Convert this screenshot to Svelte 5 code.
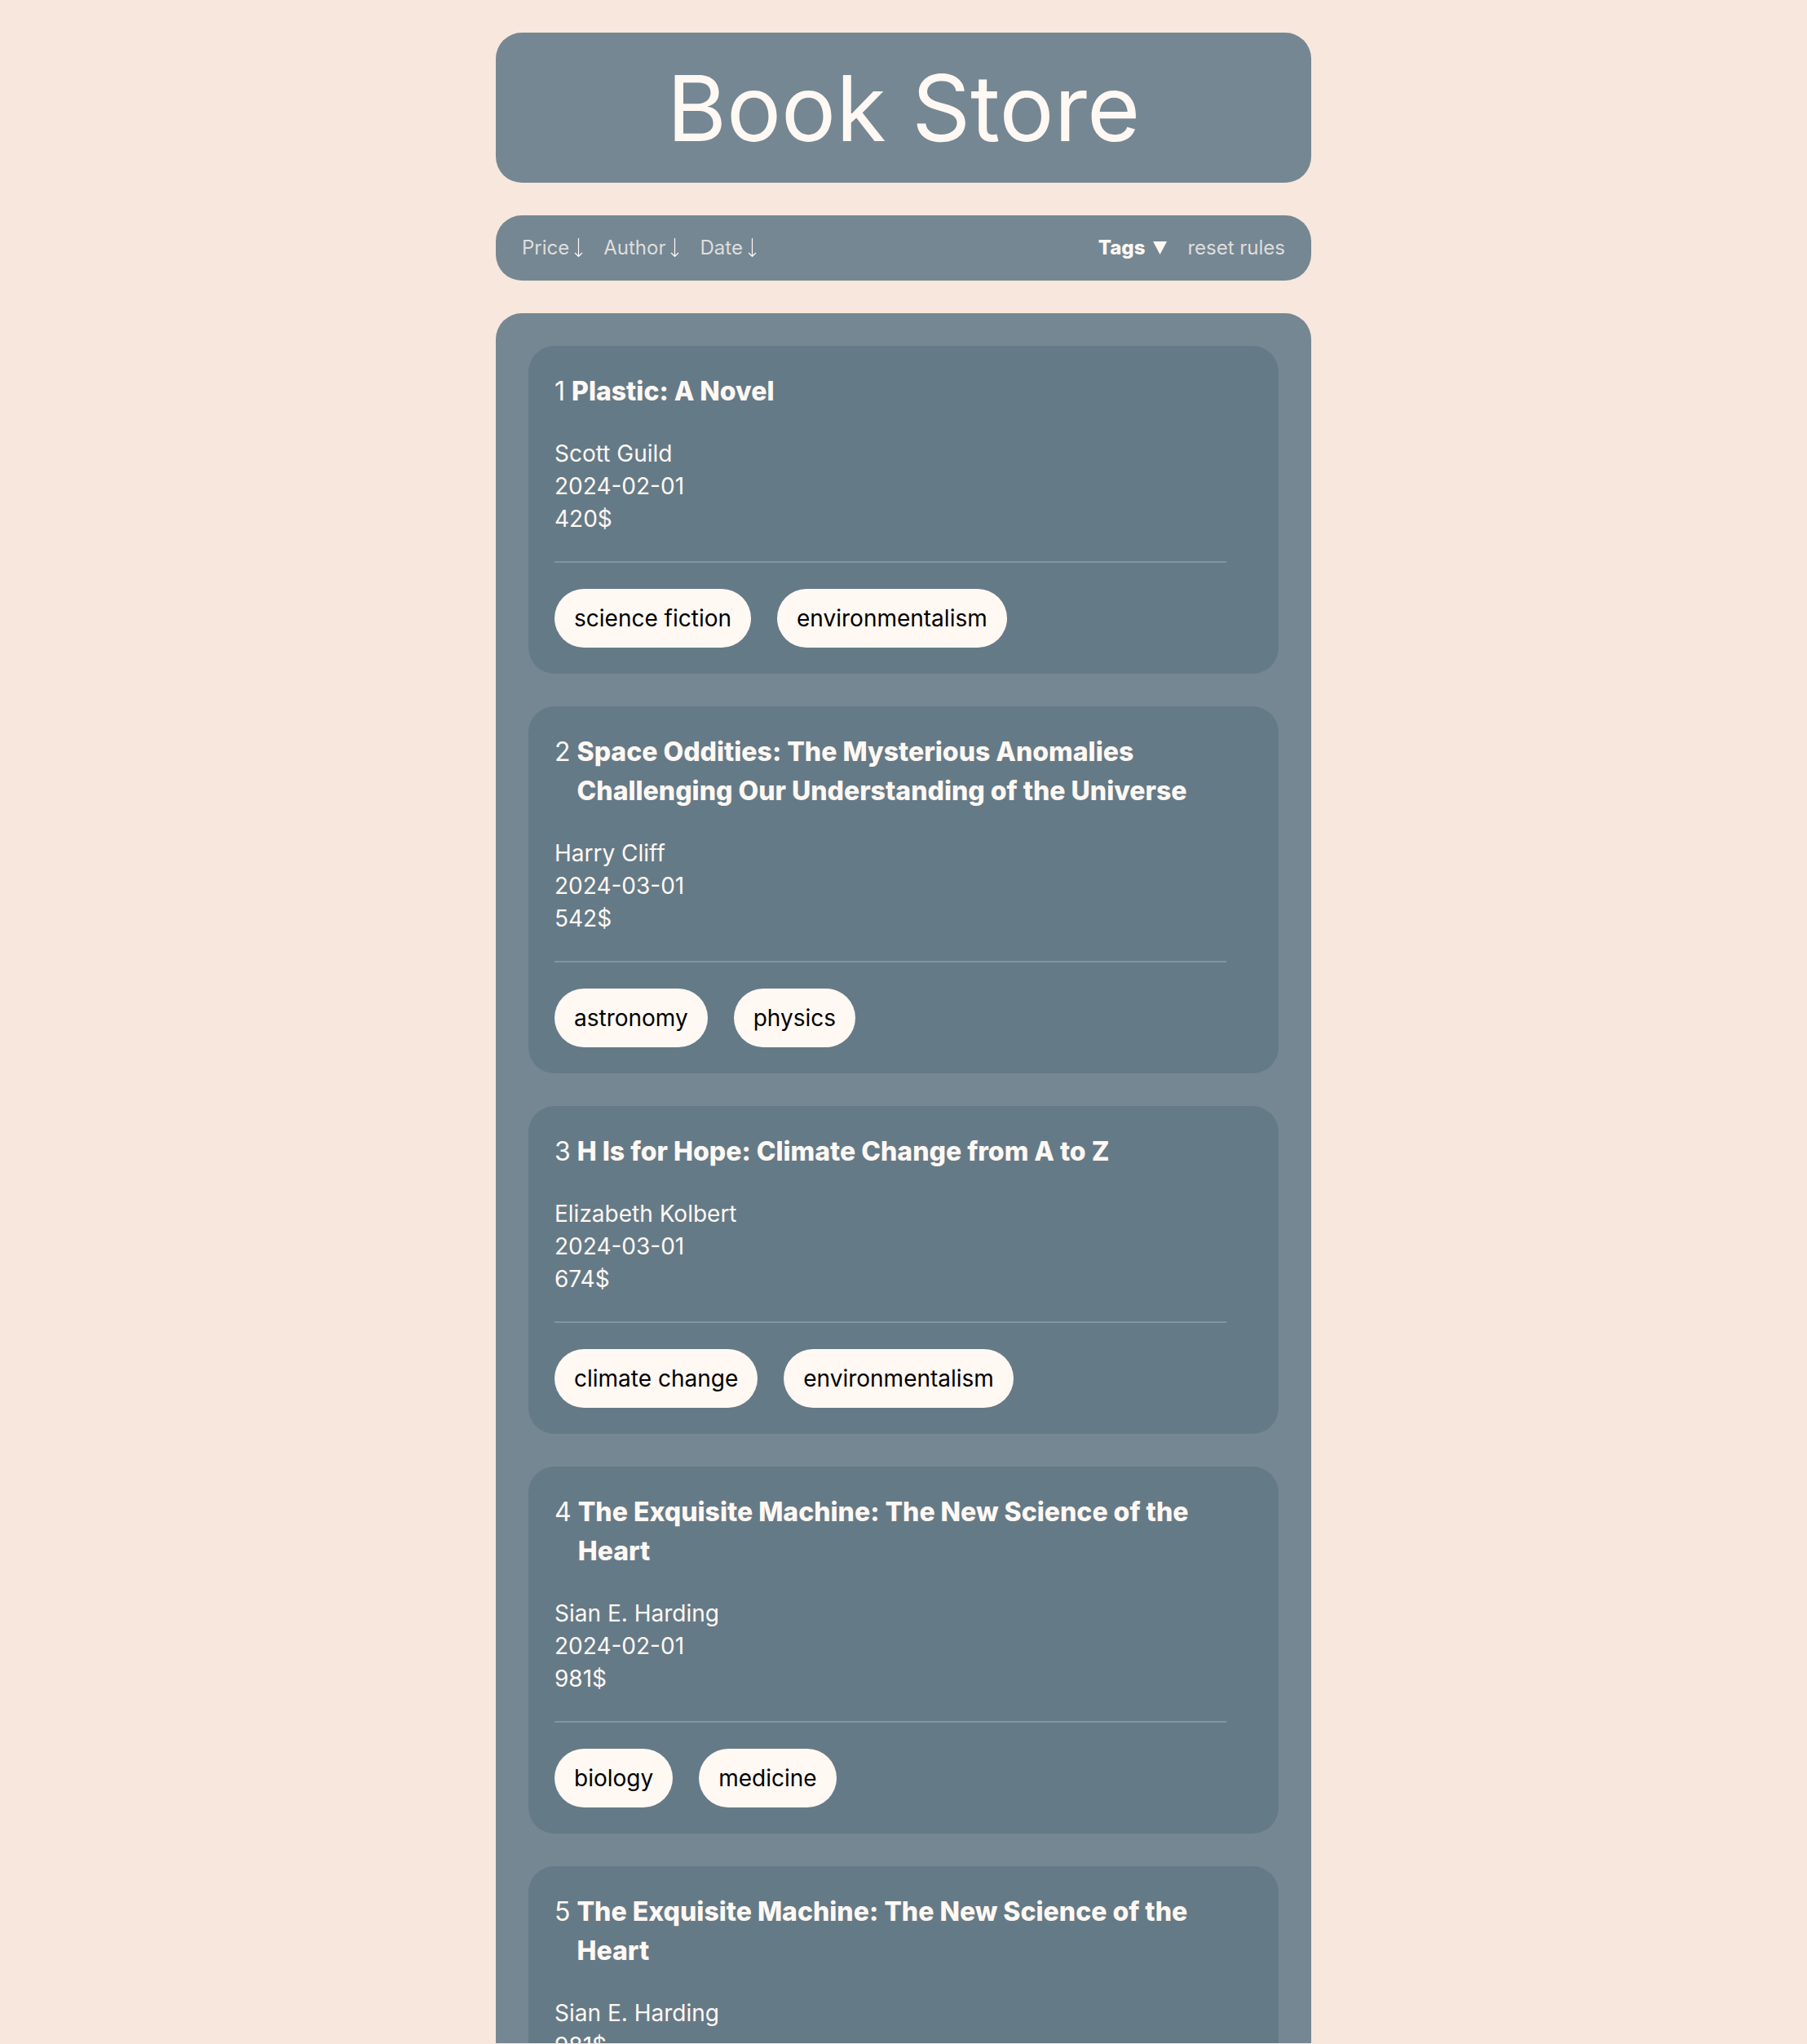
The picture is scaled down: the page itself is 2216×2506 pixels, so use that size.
<script>
  const sorts = ['Price', 'Author', 'Date'];

  const books = [
    {
      title: 'Plastic: A Novel',
      details: ['Scott Guild', '2024-02-01', '420$'],
      tags: ['science fiction', 'environmentalism']
    },
    {
      title: 'Space Oddities: The Mysterious Anomalies Challenging Our Understanding of the Universe',
      details: ['Harry Cliff', '2024-03-01', '542$'],
      tags: ['astronomy', 'physics']
    },
    {
      title: 'H Is for Hope: Climate Change from A to Z',
      details: ['Elizabeth Kolbert', '2024-03-01', '674$'],
      tags: ['climate change', 'environmentalism']
    },
    {
      title: 'The Exquisite Machine: The New Science of the Heart',
      details: ['Sian E. Harding', '2024-02-01', '981$'],
      tags: ['biology', 'medicine']
    },
    {
      title: 'The Exquisite Machine: The New Science of the Heart',
      details: ['Sian E. Harding', '981$'],
      tags: ['biology', 'medicine']
    }
  ];
</script>

<div class="page">
  <header class="panel banner">
    <h1>Book Store</h1>
  </header>

  <nav class="panel toolbar" aria-label="Sorting and filters">
    <div class="group">
      {#each sorts as sort}
        <button type="button" class="muted">
          {sort}
          <svg class="arrow" viewBox="0 0 12 24" aria-hidden="true">
            <path d="M5.5 0V22M1 18L5.5 22.3L10 18" />
          </svg>
        </button>
      {/each}
    </div>
    <div class="group">
      <button type="button" class="tags-toggle" aria-haspopup="true">
        Tags
        <svg class="triangle" viewBox="0 0 18 16" aria-hidden="true">
          <path d="M0 0H17L8.5 16Z" />
        </svg>
      </button>
      <button type="button" class="muted">reset rules</button>
    </div>
  </nav>

  <main class="panel list">
    {#each books as book, i}
      <article class="card">
        <div class="heading">
          <span class="number">{i + 1}</span>
          <h2>{book.title}</h2>
        </div>
        <div class="details">
          {#each book.details as detail}
            <p>{detail}</p>
          {/each}
        </div>
        <hr />
        <ul class="tags">
          {#each book.tags as tag}
            <li>{tag}</li>
          {/each}
        </ul>
      </article>
    {/each}
  </main>
</div>

<style>
  :global(body) {
    background: #f8e7dc;
  }

  .page {
    box-sizing: border-box;
    height: 100vh;
    overflow: hidden;
    display: flex;
    flex-direction: column;
    align-items: center;
    gap: 40px;
    padding: 40px 16px 0;
    border-bottom: 1px solid #f8e7dc;
    font-family: Inter, 'Liberation Sans', sans-serif;
    font-size: 28px;
    line-height: 40px;
    color: #fff8f3;
  }

  .panel {
    box-sizing: border-box;
    width: 100%;
    max-width: 1000px;
    flex-shrink: 0;
    background: #758793;
    border-radius: 32px;
  }

  .banner {
    padding: 24px 32px;
    text-align: center;
  }

  h1 {
    margin: 0;
    font-size: 112px;
    line-height: 136px;
    font-weight: 400;
  }

  .toolbar {
    display: flex;
    justify-content: space-between;
    padding: 20px 32px;
  }

  .group {
    display: flex;
    gap: 24px;
  }

  button {
    display: flex;
    align-items: center;
    gap: 6px;
    padding: 0;
    border: 0;
    background: none;
    color: inherit;
    font: inherit;
    font-size: 24px;
    line-height: 40px;
    cursor: pointer;
  }

  .muted {
    color: #dfdddc;
  }

  .tags-toggle {
    gap: 10px;
    font-weight: 800;
  }

  .arrow {
    width: 12px;
    height: 24px;
    fill: none;
    stroke: #fff8f3;
    stroke-width: 1.2;
  }

  .triangle {
    width: 18px;
    height: 16px;
    fill: #fff8f3;
  }

  .list {
    display: flex;
    flex-direction: column;
    gap: 40px;
    padding: 40px;
  }

  .card {
    padding: 32px;
    border-radius: 32px;
    background: #657a87;
  }

  .heading {
    display: flex;
    gap: 8px;
    font-size: 32px;
    line-height: 48px;
  }

  h2 {
    margin: 0;
    font-size: 32px;
    line-height: 48px;
    font-weight: 800;
  }

  .details {
    margin-top: 32px;
  }

  p {
    margin: 0;
  }

  hr {
    height: 2px;
    margin: 32px 32px 32px 0;
    border: 0;
    background: #8295a3;
  }

  .tags {
    display: flex;
    flex-wrap: wrap;
    gap: 32px;
    margin: 0;
    padding: 0;
    list-style: none;
  }

  li {
    padding: 16px 24px;
    border-radius: 36px;
    background: #fff8f3;
    color: #000;
  }
</style>
